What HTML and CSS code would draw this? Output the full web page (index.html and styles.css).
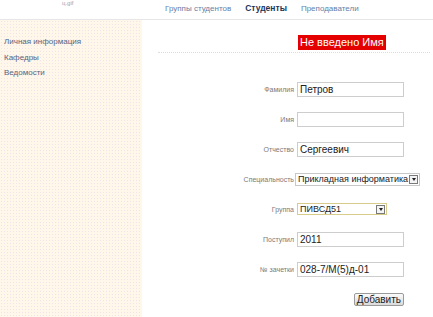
FILE: index.html
```html
<!DOCTYPE html>
<html lang="ru">
<head>
    <meta charset="UTF-8">
    <meta name="viewport" content="width=device-width, initial-scale=1.0">
    <title>Студенты</title>
    <link rel="stylesheet" href="styles.css">
</head>
<body>
    <header class="top">
        <div class="logo"><span class="logo-alt">ц.gif</span></div>
        <nav class="menu">
            <a href="#">Группы студентов</a>
            <a href="#" class="active">Студенты</a>
            <a href="#">Преподаватели</a>
        </nav>
    </header>

    <div class="page">
        <aside class="sidebar">
            <a href="#">Личная информация</a>
            <a href="#">Кафедры</a>
            <a href="#">Ведомости</a>
        </aside>

        <main class="main">
            <div class="notice">
                <span class="error">Не введено Имя</span>
            </div>

            <form class="student-form">
                <div class="row">
                    <label for="last-name">Фамилия</label>
                    <input id="last-name" type="text" value="Петров">
                </div>
                <div class="row">
                    <label for="first-name">Имя</label>
                    <input id="first-name" type="text" value="">
                </div>
                <div class="row">
                    <label for="middle-name">Отчество</label>
                    <input id="middle-name" type="text" value="Сергеевич">
                </div>
                <div class="row">
                    <label for="speciality">Специальность</label>
                    <div class="select select-wide">
                        <select id="speciality">
                            <option>Прикладная информатика</option>
                        </select>
                        <span class="arrow"></span>
                    </div>
                </div>
                <div class="row">
                    <label for="group">Группа</label>
                    <div class="select select-group">
                        <select id="group">
                            <option>ПИВСД51</option>
                        </select>
                        <span class="arrow"></span>
                    </div>
                </div>
                <div class="row">
                    <label for="year">Поступил</label>
                    <input id="year" type="text" value="2011">
                </div>
                <div class="row">
                    <label for="record-book">№ зачетки</label>
                    <input id="record-book" type="text" value="028-7/М(5)д-01">
                </div>
                <div class="row actions">
                    <button type="button">Добавить</button>
                </div>
            </form>
        </main>
    </div>
</body>
</html>
```

FILE: styles.css
```css
* {
    margin: 0;
    padding: 0;
    box-sizing: border-box;
    font-family: 'Liberation Sans', Arial, sans-serif;
}

body {
    background-color: #fff;
    color: #333;
    overflow: hidden;
}

/* top bar */
.top {
    display: flex;
    height: 20px;
    border-bottom: 1px solid #e6e6e6;
}

.logo {
    width: 165px;
    padding-left: 62px;
}

.logo-alt {
    display: block;
    font-size: 6px;
    line-height: 6px;
    color: #9aa4b4;
}

.menu {
    display: flex;
    gap: 14px;
    padding-top: 4px;
    font-size: 8px;
    line-height: 9px;
}

.menu a {
    color: #6580a6;
    text-decoration: none;
}

.menu a.active {
    color: #1e3556;
    font-weight: bold;
    font-size: 8.5px;
}

/* layout */
.page {
    display: flex;
    height: calc(100vh - 20px);
}

.sidebar {
    width: 142px;
    display: flex;
    flex-direction: column;
    padding: 14px 4px;
    background-color: #fff7ea;
    background-image: radial-gradient(#f1e3e8 0.6px, transparent 0.7px);
    background-size: 3px 3px;
}

.sidebar a {
    font-size: 8px;
    line-height: 15.5px;
    color: #55647e;
    text-decoration: none;
}

.main {
    flex: 1;
    padding: 0 3px 0 16px;
}

.notice {
    height: 33px;
    padding: 12px 0 0 140px;
    border-bottom: 1px dotted #dcdce4;
    background-image: radial-gradient(#e4e4ec 0.6px, transparent 0.7px);
    background-size: 4px 4px;
}

.error {
    display: inline-block;
    padding: 0 2px;
    background-color: #e50000;
    color: #fff;
    font-size: 11px;
    line-height: 15px;
}

/* form */
.student-form {
    display: flex;
    flex-direction: column;
    margin-top: 21px;
}

.row {
    display: flex;
    align-items: center;
    gap: 3px;
    height: 30px;
}

.row label {
    width: 136px;
    text-align: right;
    font-size: 7px;
    color: #7a7a7a;
}

.row input {
    width: 107px;
    height: 15px;
    padding: 0 2px;
    border: 1px solid #cdcdcd;
    font-size: 10px;
    color: #222;
    outline: none;
}

.select {
    display: flex;
    align-items: center;
    height: 13px;
    border: 1px solid #c8c8c8;
    background-color: #fff;
}

.select select {
    flex: 1;
    min-width: 0;
    appearance: none;
    border: none;
    background: transparent;
    padding: 0 0 0 2px;
    font-size: 9px;
    color: #222;
    outline: none;
}

.select-wide {
    width: 125px;
    margin-left: -2px;
}

.select-group {
    width: 90px;
    height: 12px;
    border-color: #d8cb8c;
}

.arrow {
    display: flex;
    align-items: center;
    justify-content: center;
    flex: none;
    width: 9px;
    height: 9px;
    margin-right: 1px;
    border: 1px solid #7a7a7a;
    background-color: #f4f4f4;
}

.arrow::after {
    content: "";
    border-left: 2.5px solid transparent;
    border-right: 2.5px solid transparent;
    border-top: 3px solid #222;
}

.actions {
    width: 246px;
    justify-content: flex-end;
}

.actions button {
    height: 13px;
    padding: 0 2px;
    border: 1px solid #9a9a9a;
    border-radius: 2px;
    background: linear-gradient(#fbfbfb, #dadada);
    font-size: 10px;
    line-height: 11px;
    color: #222;
}
```
